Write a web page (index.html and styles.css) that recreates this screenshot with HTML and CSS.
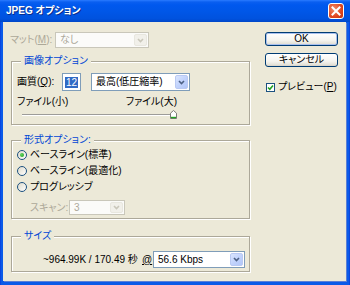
FILE: index.html
```html
<!DOCTYPE html>
<html lang="ja">
<head>
<meta charset="utf-8">
<title>JPEG オプション</title>
<link rel="stylesheet" href="styles.css">
</head>
<body>
<div class="window">
  <div class="titlebar">
    <span class="title">JPEG オプション</span>
    <span class="close"><svg width="10" height="10" viewBox="0 0 10 10"><path d="M1.5 1.5L8.5 8.5M8.5 1.5L1.5 8.5" stroke="#fff" stroke-width="2" stroke-linecap="square"/></svg></span>
  </div>
  <div class="client">
    <div class="main">
      <div class="matte-row">
        <span class="lbl disabled">マット(<u>M</u>):</span>
        <div class="combo disabled matte-combo"><span class="val">なし</span><span class="dd"><svg width="7" height="5" viewBox="0 0 7 5"><path d="M1 1L3.5 3.5L6 1" fill="none" stroke-width="1.6"/></svg></span></div>
      </div>

      <div class="group g-image">
        <span class="legend">画像オプション</span>
        <div class="quality-row">
          <span class="lbl">画質(<u>Q</u>):</span>
          <div class="num"><span class="hl">12</span></div>
          <div class="combo quality-combo"><span class="val">最高(低圧縮率)</span><span class="dd"><svg width="7" height="5" viewBox="0 0 7 5"><path d="M1 1L3.5 3.5L6 1" fill="none" stroke-width="1.6"/></svg></span></div>
        </div>
        <div class="file-row"><span>ファイル(小)</span><span>ファイル(大)</span></div>
        <div class="slider">
          <div class="track"></div>
          <svg class="thumb" width="7" height="9" viewBox="0 0 7 9"><path d="M0.5 3.2L3.5 0.5L6.5 3.2V8.5H0.5Z" fill="#fff" stroke="#7b7b76"/><path d="M1 7.5H6" stroke="#21a121" stroke-width="1.4"/></svg>
        </div>
      </div>

      <div class="group g-format">
        <span class="legend">形式オプション:</span>
        <div class="radio-row"><span class="radio on"></span><span>ベースライン(標準)</span></div>
        <div class="radio-row"><span class="radio"></span><span>ベースライン(最適化)</span></div>
        <div class="radio-row"><span class="radio"></span><span>プログレッシブ</span></div>
        <div class="scan-row">
          <span class="lbl disabled">スキャン:</span>
          <div class="combo disabled scan-combo"><span class="val">3</span><span class="dd"><svg width="7" height="5" viewBox="0 0 7 5"><path d="M1 1L3.5 3.5L6 1" fill="none" stroke-width="1.6"/></svg></span></div>
        </div>
      </div>

      <div class="group g-size">
        <span class="legend">サイズ</span>
        <div class="size-row">
          <span class="size-text">~964.99K / 170.49 秒</span>
          <span class="at"><u>@</u></span>
          <div class="combo speed-combo"><span class="val">56.6 Kbps</span><span class="dd"><svg width="7" height="5" viewBox="0 0 7 5"><path d="M1 1L3.5 3.5L6 1" fill="none" stroke-width="1.6"/></svg></span></div>
        </div>
      </div>
    </div>

    <div class="side">
      <button class="btn default">OK</button>
      <button class="btn">キャンセル</button>
      <div class="check-row">
        <span class="check"><svg width="7" height="7" viewBox="0 0 7 7"><path d="M1 3.5L2.8 5.3L6 1.5" fill="none" stroke="#21a121" stroke-width="1.6"/></svg></span>
        <span>プレビュー(<u>P</u>)</span>
      </div>
    </div>
  </div>
</div>
</body>
</html>
```

FILE: styles.css
```css
* { box-sizing: border-box; }
html, body { margin: 0; padding: 0; }
body {
  width: 350px;
  height: 285px;
  overflow: hidden;
  font-family: "Liberation Sans", "Noto Sans CJK JP", sans-serif;
  font-size: 10px;
  line-height: 12px;
  font-feature-settings: "palt" 1;
  color: #000;
}
u { text-decoration: underline; text-underline-offset: 1px; }

.window {
  width: 350px;
  height: 285px;
  display: flex;
  flex-direction: column;
  background: linear-gradient(90deg, #0831d9 0, #0a5ae8 1px, #0a5ae8 calc(100% - 1px), #0831d9 100%);
}

.titlebar {
  height: 22px;
  flex: none;
  display: flex;
  align-items: center;
  justify-content: space-between;
  padding: 0 6px 0 6px;
  background: linear-gradient(#2a7bff 0, #0a5ff0 2px, #0058ee 5px, #0057e8 50%, #0052de 85%, #0047c8 100%);
  color: #fff;
}
.title {
  font-size: 10px;
  font-weight: bold;
  text-shadow: 1px 1px 0 #0a2e8c;
}
.close {
  width: 16px;
  height: 16px;
  display: flex;
  align-items: center;
  justify-content: center;
  border: 1px solid #fff;
  border-radius: 3px;
  background: radial-gradient(circle at 35% 35%, #f08a6a, #e0461f 60%, #c03010);
}

.client {
  flex: 1;
  margin: 0 4px 4px 3px;
  background: #ece9d8;
  display: flex;
  box-shadow: 1px 1px 0 #5c7fd6;
}

.main {
  width: 248px;
  padding: 10px 0 0 8px;
  display: flex;
  flex-direction: column;
}

.lbl { white-space: nowrap; }
.disabled { color: #aca899; }

.matte-row {
  height: 16px;
  display: flex;
  align-items: center;
  margin-left: -1px;
}
.matte-row .lbl { width: 45px; }

/* combos */
.combo {
  display: flex;
  align-items: stretch;
  border: 1px solid #7f9db9;
  background: #fff;
  padding: 1px;
}
.combo .val {
  flex: 1;
  display: flex;
  align-items: center;
  padding-left: 3px;
  white-space: nowrap;
}
.combo .dd {
  width: 13px;
  display: flex;
  align-items: center;
  justify-content: center;
  border: 1px solid #b9c9f3;
  border-radius: 2px;
  background: linear-gradient(135deg, #dbe6fe, #c2d3fc 50%, #b1c6f8);
}
.combo .dd path { stroke: #4d6185; }
.combo.disabled { border-color: #c9c7ba; background: #fbfbf9; }
.combo.disabled .val { color: #aca899; }
.combo.disabled .dd { border-color: #e8e7df; background: #f1f0ea; }
.combo.disabled .dd path { stroke: #c9c7ba; }

.matte-combo { width: 94px; height: 16px; }
.quality-combo { width: 99px; height: 18px; }
.scan-combo { width: 56px; height: 15px; }
.speed-combo { width: 92px; height: 17px; }

/* groups */
.group {
  position: relative;
  width: 239px;
  border: 1px solid #aca899;
  box-shadow: inset 1px 1px 0 #fff, 1px 1px 0 #fff;
  padding-left: 5px;
}
.legend {
  position: absolute;
  top: -7px;
  left: 9px;
  padding: 0 3px;
  background: #ece9d8;
  color: #0046d5;
  line-height: 12px;
}
.g-image { margin-top: 13px; height: 64px; padding-top: 11px; }
.g-format { margin-top: 15px; height: 79px; padding-top: 6px; }
.g-size { margin-top: 17px; height: 36px; padding-top: 14px; }

.quality-row {
  height: 18px;
  display: flex;
  align-items: center;
}
.quality-row .lbl { width: 45px; }
.num {
  width: 19px;
  height: 18px;
  border: 1px solid #7f9db9;
  background: #fff;
  display: flex;
  align-items: center;
  padding-left: 2px;
  margin-right: 10px;
}
.num .hl {
  background: #316ac5;
  color: #fff;
  line-height: 11px;
  padding: 0 1px;
}

.file-row {
  margin-top: 5px;
  width: 160px;
  display: flex;
  justify-content: space-between;
}
.slider {
  position: relative;
  margin: 2px 0 0 5px;
  width: 155px;
  height: 9px;
}
.track {
  position: relative;
  top: 4px;
  width: 153px;
  height: 2px;
  border-top: 1px solid #9d9c99;
  border-bottom: 1px solid #fff;
}
.thumb { position: absolute; right: 0; top: 0; }

.radio-row {
  height: 16px;
  display: flex;
  align-items: center;
  gap: 3px;
}
.radio {
  width: 10px;
  height: 10px;
  border-radius: 50%;
  border: 1px solid #1c5180;
  background: linear-gradient(135deg, #dcd9cb, #fff);
  display: flex;
  align-items: center;
  justify-content: center;
}
.radio.on::after {
  content: "";
  width: 4px;
  height: 4px;
  border-radius: 50%;
  background: radial-gradient(circle at 35% 35%, #5fd35f, #21a121);
}

.scan-row {
  margin-top: 5px;
  height: 15px;
  display: flex;
  align-items: center;
  padding-left: 13px;
}
.scan-row .lbl { width: 39px; }

.size-row {
  height: 17px;
  display: flex;
  align-items: center;
  padding-left: 26px;
}
.size-text { width: 99px; white-space: nowrap; }
.at { width: 11px; }

/* side */
.side {
  width: 73px;
  margin-left: 14px;
  padding-top: 10px;
  display: flex;
  flex-direction: column;
}
.btn {
  height: 14px;
  padding: 0;
  font: inherit;
  line-height: 12px;
  color: #000;
  border: 1px solid #003c74;
  border-radius: 3px;
  background: linear-gradient(#ffffff, #f5f4ef 60%, #e3e1d7 90%, #d6d0c5);
}
.btn.default { box-shadow: inset 0 0 0 1px #a9c0ee; }
.btn + .btn { margin-top: 7px; }

.check-row {
  margin-top: 14px;
  height: 12px;
  display: flex;
  align-items: center;
  gap: 3px;
  padding-left: 1px;
}
.check {
  width: 9px;
  height: 9px;
  border: 1px solid #1c5180;
  background: #fff;
  display: flex;
  align-items: center;
  justify-content: center;
}
```
